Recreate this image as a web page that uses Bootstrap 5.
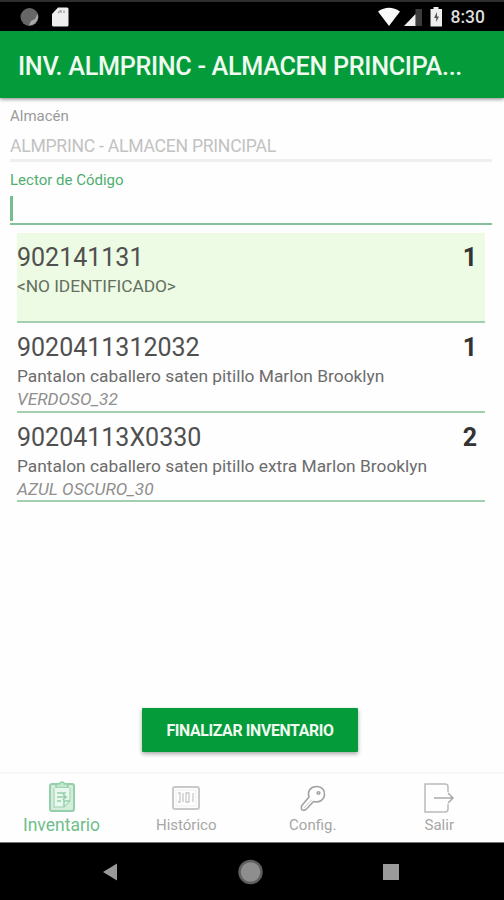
<!DOCTYPE html>
<html lang="es">
<head>
<meta charset="utf-8">
<meta name="viewport" content="width=device-width, initial-scale=1">
<title>Inventario</title>
<link href="https://cdn.jsdelivr.net/npm/bootstrap@5.3.0/dist/css/bootstrap.min.css" rel="stylesheet">
<style>
  body { font-family: Roboto, "Liberation Sans", sans-serif; color: #555; width: 504px; height: 900px; overflow: hidden; background: #fefefe; }
  svg { display: block; flex: none; }
  .status-bar { height: 31px; background: #000; border-top: 2px solid #2e2e2e; padding: 0 19px 0 20px; }
  .clock { font-size: 17.5px; font-weight: 500; color: #ddd; line-height: 28px; }
  .app-bar { height: 67px; background: #049c3b; padding: 4px 18px 0; box-shadow: 0 1px 4px rgba(0,0,0,.5); z-index: 1; }
  .app-title { font-size: 25.2px; font-weight: 500; color: #f0faf0; line-height: 30px; letter-spacing: -.31px; }
  .form-area { height: 135px; padding: 8px 12px 0 10px; }
  .field-label { font-size: 15px; line-height: 20px; color: #9a9a9a; }
  .field-label.active { color: #4fae70; }
  .field-value { font-size: 17.6px; line-height: 24px; padding-top: 8px; border-bottom: 3px solid #efefef; color: #c2c2c2; box-sizing: content-box; height: 25px; letter-spacing: -.26px; }
  .field-input { height: 35px; border-bottom: 2px solid #82c19a; padding-top: 6px; }
  .caret { width: 3px; height: 25px; background: #74be8d; }
  .items { padding: 0 19px 0 17px; }
  .item { height: 89.5px; border-bottom: 2px solid #a3cfb0; padding: 10px 8px 0 0; }
  .item.unknown { height: 90px; background: #edfae4; }
  .code { font-size: 25px; line-height: 30px; color: #505050; }
  .qty { font-size: 25px; line-height: 30px; color: #333; font-weight: 700; }
  .desc { font-size: 17.35px; line-height: 24px; color: #6c6c6c; padding-top: 1px; }
  .unknown .desc { color: #63705f; letter-spacing: -.06px; }
  .variant { font-size: 17.3px; line-height: 22px; color: #8f8f8f; font-style: italic; }
  .btn-finish { width: 216px; height: 44px; background: #049c3b; color: #f0faf0; font-size: 15.8px; letter-spacing: -.33px; font-weight: 700; border-radius: 1px; border: 0; box-shadow: 0 2px 4px rgba(0,0,0,.35); padding: 2px 0 0; }
  .tabs { height: 70px; border-top: 2px solid #f7f7f7; background: #fefefe; }
  .tab { width: 126.500px; color: #a6a6a6; font-size: 15px; line-height: 20px; padding-top: 7px; }
  .tab.current { width: 123px; color: #6fbe89; font-size: 17.5px; }
  .tab svg { height: 34px; width: 36px; }
  .sys-nav { height: 58px; background: #000; border-top: 1px solid #777; }
</style>
</head>
<body class="d-flex flex-column">
  <div class="status-bar d-flex align-items-center justify-content-between">
    <div class="d-flex align-items-center gap-2">
      <svg width="20" height="20" viewBox="0 0 20 20"><circle cx="9.5" cy="10" r="9" fill="#666"/><path d="M17.5 7A8.5 8.5 0 0 1 9 18.2L11 14l4-2z" fill="#aaa"/></svg>
      <svg class="ms-1" width="17" height="20" viewBox="0 0 17 20"><path d="M6 .5H15a1.500 1.500 0 0 1 1.500 1.500V18a1.500 1.500 0 0 1-1.500 1.500H1.500A1.500 1.500 0 0 1 0 18V7z" fill="#eee"/><path d="M6 6l3-3M9 6V3.500M12 6V3.500" stroke="#aaa" stroke-width="1.500"/></svg>
    </div>
    <div class="d-flex align-items-center">
      <svg width="22" height="20" viewBox="0 0 22 20"><path d="M0 4.500Q11-3 22 4.500L11 19z" fill="#fafafa"/></svg>
      <svg class="ms-1" width="18" height="20" viewBox="0 0 18 20"><path d="M11.500 2H18v17h-6.500z" fill="#3c3c3c"/><path d="M0 19L11.500 7v12z" fill="#f0f0f0"/></svg>
      <svg class="mx-2" width="13" height="20" viewBox="0 0 13 20"><path d="M3.500 0h5v2H12v17.500H.5V2h3z" fill="#eee"/><path d="M7 5L4 11h2.200v4L9 9.500H7z" fill="#555"/></svg>
      <span class="clock">8:30</span>
    </div>
  </div>
  <header class="app-bar position-relative d-flex align-items-center">
    <div class="app-title text-nowrap">INV. ALMPRINC - ALMACEN PRINCIPA...</div>
  </header>
  <section class="form-area">
    <div class="field-label">Almacén</div>
    <div class="field-value">ALMPRINC - ALMACEN PRINCIPAL</div>
    <div class="field-label active mt-2">Lector de Código</div>
    <div class="field-input"><div class="caret"></div></div>
  </section>
  <main class="items flex-grow-1">
    <div class="item unknown">
      <div class="d-flex justify-content-between"><span class="code">902141131</span><span class="qty">1</span></div>
      <div class="desc">&lt;NO IDENTIFICADO&gt;</div>
    </div>
    <div class="item">
      <div class="d-flex justify-content-between"><span class="code">9020411312032</span><span class="qty">1</span></div>
      <div class="desc">Pantalon caballero saten pitillo Marlon Brooklyn</div>
      <div class="variant">VERDOSO_32</div>
    </div>
    <div class="item">
      <div class="d-flex justify-content-between"><span class="code">90204113X0330</span><span class="qty">2</span></div>
      <div class="desc">Pantalon caballero saten pitillo extra Marlon Brooklyn</div>
      <div class="variant">AZUL OSCURO_30</div>
    </div>
  </main>
  <div class="text-center mb-3 pb-1 pe-1 ps-1"><button class="btn btn-finish me-1">FINALIZAR INVENTARIO</button></div>
  <nav class="tabs d-flex">
    <div class="tab current d-flex flex-column align-items-center">
      <svg viewBox="0 0 36 34" fill="none" stroke="#93cfaa" stroke-width="1.500"><rect x="6" y="3" width="24" height="27" rx="2" fill="#d5eddd" stroke-width="2"/><path d="M12 3h3q3-4 6 0h3v4H12z" fill="#c3e6cf"/><path d="M10 7v19h10l6-6V7" fill="#eaf7ef" stroke="#b0dcc0"/><path d="M20 26v-6h6M13 12h9M13 16h9l-3-3M22 16l-3 3M13 20h4"/></svg>
      <span>Inventario</span>
    </div>
    <div class="tab d-flex flex-column align-items-center">
      <svg viewBox="0 0 36 34" fill="none" stroke="#c8c8c8" stroke-width="2"><rect x="5" y="6" width="26" height="22" rx="2"/><rect x="8" y="9" width="20" height="16" stroke="#eee" stroke-width="1"/><path d="M10 12h2v9h-2M15 12v9M18 12h3v9h-3zM25 12v9" stroke-width="1.300"/></svg>
      <span>Histórico</span>
    </div>
    <div class="tab d-flex flex-column align-items-center">
      <svg viewBox="0 0 36 34" fill="none" stroke="#a2a2a2" stroke-width="1.600" stroke-linejoin="round"><path d="M14 16C12 10 16 5.500 21.500 5.500C27 5.500 30 9.500 29.500 14C29 19 24 22 18.500 20.500L11.500 28Q9 30.500 6.500 28.500V25z"/><path d="M9 27l8-8.500" stroke="#ccc" stroke-width="1"/><circle cx="23.500" cy="12" r="1.300"/></svg>
      <span>Config.</span>
    </div>
    <div class="tab d-flex flex-column align-items-center">
      <svg viewBox="0 0 36 34" fill="none" stroke="#aaa" stroke-width="1.500"><path d="M27 11V6q0-3-3-3H4v28h20q3 0 3-3v-5" stroke="#bbb"/><path d="M13 17h19M27 12l5 5-5 5"/></svg>
      <span>Salir</span>
    </div>
  </nav>
  <footer class="sys-nav d-flex align-items-center justify-content-center">
    <svg width="330" height="30" viewBox="0 0 330 30"><path d="M16 15L30 6.500v17z" fill="#999"/><circle cx="163.500" cy="15" r="11" fill="#8e8e8e" stroke="#5f5f5f" stroke-width="2.500"/><rect x="296" y="7" width="16" height="16" fill="#9a9a9a"/></svg>
  </footer>
<script src="https://cdn.jsdelivr.net/npm/bootstrap@5.3.0/dist/js/bootstrap.bundle.min.js"></script>
</body>
</html>
